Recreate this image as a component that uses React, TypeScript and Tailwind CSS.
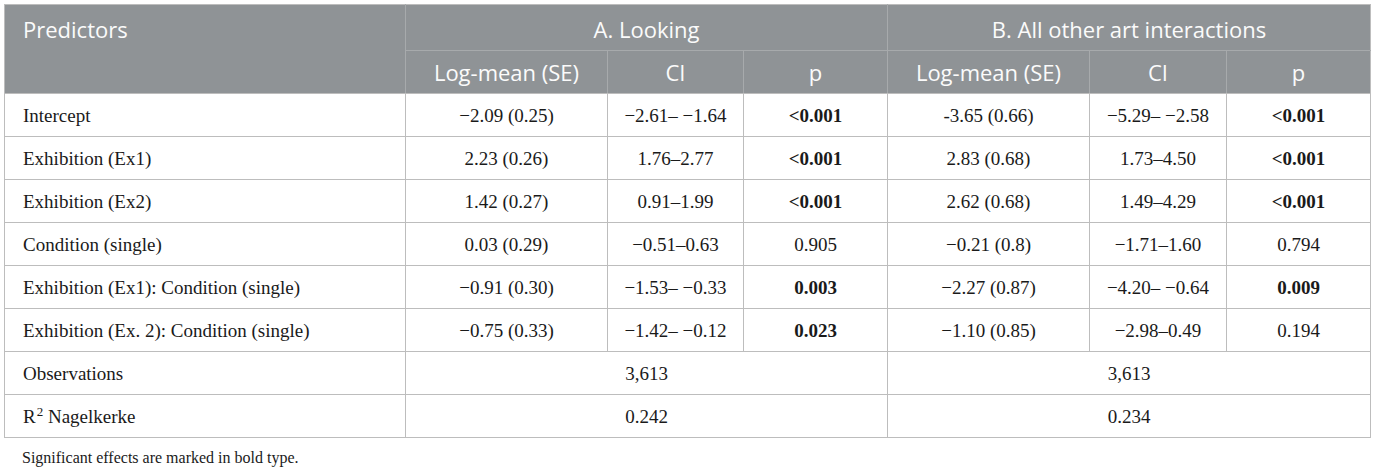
import React from "react";

interface Row {
    label: React.ReactNode;
    a: [string, string, string];
    b: [string, string, string];
    boldA?: boolean;
    boldB?: boolean;
}

const rows: Row[] = [
    { label: "Intercept", a: ["\u22122.09 (0.25)", "\u22122.61\u2013 \u22121.64", "<0.001"], b: ["-3.65 (0.66)", "\u22125.29\u2013 \u22122.58", "<0.001"], boldA: true, boldB: true },
    { label: "Exhibition (Ex1)", a: ["2.23 (0.26)", "1.76\u20132.77", "<0.001"], b: ["2.83 (0.68)", "1.73\u20134.50", "<0.001"], boldA: true, boldB: true },
    { label: "Exhibition (Ex2)", a: ["1.42 (0.27)", "0.91\u20131.99", "<0.001"], b: ["2.62 (0.68)", "1.49\u20134.29", "<0.001"], boldA: true, boldB: true },
    { label: "Condition (single)", a: ["0.03 (0.29)", "\u22120.51\u20130.63", "0.905"], b: ["\u22120.21 (0.8)", "\u22121.71\u20131.60", "0.794"] },
    { label: "Exhibition (Ex1): Condition (single)", a: ["\u22120.91 (0.30)", "\u22121.53\u2013 \u22120.33", "0.003"], b: ["\u22122.27 (0.87)", "\u22124.20\u2013 \u22120.64", "0.009"], boldA: true, boldB: true },
    { label: "Exhibition (Ex. 2): Condition (single)", a: ["\u22120.75 (0.33)", "\u22121.42\u2013 \u22120.12", "0.023"], b: ["\u22121.10 (0.85)", "\u22122.98\u20130.49", "0.194"], boldA: true },
];

const td = "border border-[#bdbdbd] text-center align-middle p-0";
const lbl = "border border-[#bdbdbd] text-left align-middle p-0 pl-[18px]";
const th = "font-normal text-[#fbfbfb] text-[22px] p-0";
const sub = `${th} border border-[#a7aaac] border-b-[#bdbdbd]`;

export default function App() {
    return (
        <div className="w-[1375px] h-[469px] bg-white pt-[4px] pl-[4px] font-['Liberation_Serif',serif] text-[#1a1a1a]">
            <table className="table-fixed border-collapse w-[1366px] text-[19px] leading-none">
                <colgroup>
                    <col className="w-[401px]" />
                    <col className="w-[202px]" />
                    <col className="w-[136px]" />
                    <col className="w-[144px]" />
                    <col className="w-[202px]" />
                    <col className="w-[137px]" />
                    <col className="w-[144px]" />
                </colgroup>
                <thead className="bg-[#8f9396] font-['Open_Sans',sans-serif]">
                    <tr className="h-[46px]">
                        <th rowSpan={2} className={`${th} border border-[#bdbdbd] border-r-[#a7aaac] text-left align-top pl-[18px] pt-[13px]`}>Predictors</th>
                        <th colSpan={3} className={`${th} border border-[#a7aaac] border-t-[#bdbdbd] pt-[3px]`}>A. Looking</th>
                        <th colSpan={3} className={`${th} border border-[#a7aaac] border-t-[#bdbdbd] border-r-[#bdbdbd] pt-[3px]`}>B. All other art interactions</th>
                    </tr>
                    <tr className="h-[43px]">
                        <th className={sub}>Log-mean (SE)</th>
                        <th className={sub}>CI</th>
                        <th className={sub}>p</th>
                        <th className={sub}>Log-mean (SE)</th>
                        <th className={sub}>CI</th>
                        <th className={`${sub} border-r-[#bdbdbd]`}>p</th>
                    </tr>
                </thead>
                <tbody>
                    {rows.map((r, i) => (
                        <tr key={i} className="h-[43px]">
                            <td className={lbl}>{r.label}</td>
                            <td className={td}>{r.a[0]}</td>
                            <td className={td}>{r.a[1]}</td>
                            <td className={`${td} ${r.boldA ? "font-bold" : ""}`}>{r.a[2]}</td>
                            <td className={td}>{r.b[0]}</td>
                            <td className={td}>{r.b[1]}</td>
                            <td className={`${td} ${r.boldB ? "font-bold" : ""}`}>{r.b[2]}</td>
                        </tr>
                    ))}
                    <tr className="h-[43px]">
                        <td className={lbl}>Observations</td>
                        <td colSpan={3} className={td}>3,613</td>
                        <td colSpan={3} className={td}>3,613</td>
                    </tr>
                    <tr className="h-[43px]">
                        <td className={lbl}>R<span className="relative top-[-7px] text-[13px] pl-[1px]">2</span> Nagelkerke</td>
                        <td colSpan={3} className={td}>0.242</td>
                        <td colSpan={3} className={td}>0.234</td>
                    </tr>
                </tbody>
            </table>
            <p className="mt-[12px] pl-[18px] text-[16px] leading-none">Significant effects are marked in bold type.</p>
        </div>
    );
}
